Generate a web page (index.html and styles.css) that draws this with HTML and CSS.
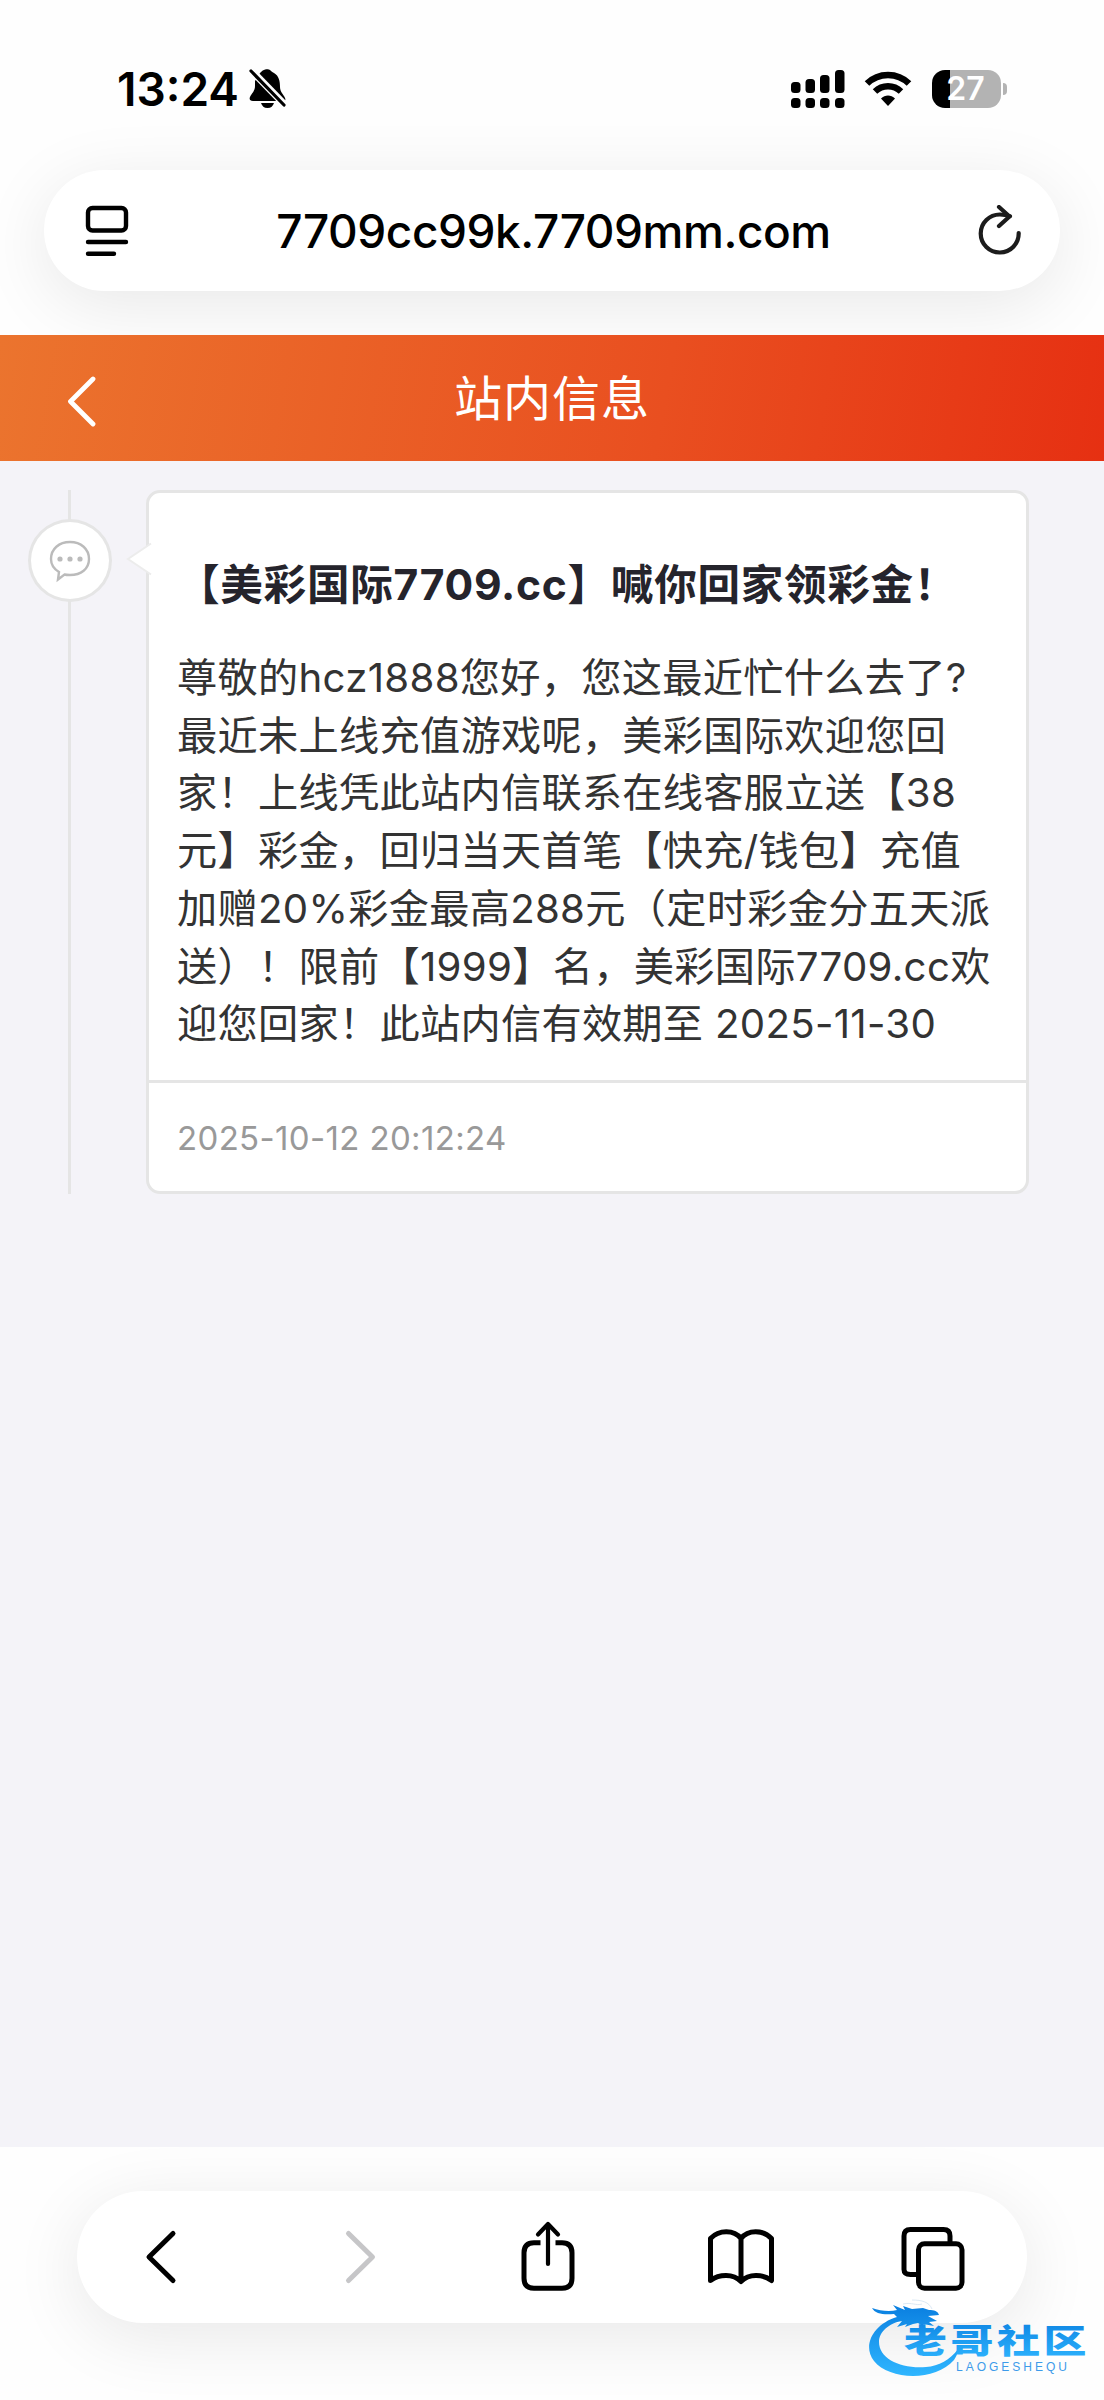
FILE: index.html
```html
<!DOCTYPE html>
<html lang="zh-CN">
<head>
  <meta charset="UTF-8">
  <meta name="viewport" content="width=device-width, initial-scale=1.0">
  <title>站内信息</title>
  <link rel="stylesheet" href="styles.css">
</head>
<body>
  <div class="top">
    <div class="status">
      <div class="status-left">
        <span class="time">13:24</span>
        <svg class="bell" width="38" height="42" viewBox="0 0 38 42">
          <path d="M11 5C13 3 14 2 15 2c1-1 5-1 6 0 1 1 2 2 4 3 5 3 6 8 6 14 0 5 4 8 5 11 1 2 0 3-2 3H4c-3 0-4-2-3-4 2-4 5-6 5-11V13z"/>
          <path d="M12 35h13c-1 3-3 5-6.500 5S13 38 12 35z"/>
          <path d="M1 1l36 37" stroke="#fdfdfd" stroke-width="7"/>
          <path d="M2 3l33 34" stroke="#000" stroke-width="3.200" stroke-linecap="round"/>
        </svg>
      </div>
      <div class="status-right">
        <svg width="54" height="40" viewBox="0 0 54 40">
          <rect x="0" y="13" width="9.500" height="11" rx="3.500"/>
          <rect x="14.500" y="10" width="9.500" height="14" rx="3.500"/>
          <rect x="29" y="6" width="9.500" height="18" rx="3.500"/>
          <rect x="44" y="1" width="9.500" height="23" rx="3.500"/>
          <rect x="0" y="29" width="9.500" height="10" rx="3.500"/>
          <rect x="14.500" y="29" width="9.500" height="10" rx="3.500"/>
          <rect x="29" y="29" width="9.500" height="10" rx="3.500"/>
          <rect x="44" y="29" width="9.500" height="10" rx="3.500"/>
        </svg>
        <svg class="wifi" width="48" height="40" viewBox="0 0 48 40">
          <path d="M3 14.500a30 30 0 0 1 42 0" fill="none" stroke="#000" stroke-width="6.500"/>
          <path d="M11 22.500a19 19 0 0 1 26 0" fill="none" stroke="#000" stroke-width="6.500"/>
          <path d="M24 37l-7-7.500c4-4 10-4 14 0z"/>
        </svg>
        <div class="battery"><span>27</span></div>
        <div class="battery-nub"></div>
      </div>
    </div>
    <div class="address">
      <svg width="44" height="52" viewBox="0 0 44 52" fill="none" stroke="#000" stroke-width="4.400" stroke-linecap="round">
        <rect x="3" y="3" width="38" height="22.500" rx="4.500"/>
        <path d="M3 37h38M3 48.700h26"/>
      </svg>
      <span class="url">7709cc99k.7709mm.com</span>
      <svg width="44" height="52" viewBox="0 0 44 52" fill="none" stroke="#1c1c1c" stroke-width="4.200" stroke-linecap="round" stroke-linejoin="round">
        <path d="M40.700 28A19 19 0 1 1 22 9.500c4 0 7 .7 10 1.700"/>
        <path d="M21 2l10.500 9.500L21 21"/>
      </svg>
    </div>
  </div>

  <header class="header">
    <svg width="30" height="52" viewBox="0 0 30 52" fill="none" stroke="#fff" stroke-width="4.800" stroke-linecap="round" stroke-linejoin="round">
      <path d="M27 4L4.500 26.500 27 49"/>
    </svg>
    <h1>站内信息</h1>
  </header>

  <main class="content">
    <div class="timeline">
      <div class="dot">
        <svg width="42" height="44" viewBox="0 0 42 44" fill="none" stroke="#bbb" stroke-width="2.400">
          <path d="M10 33C5 30 2 25.500 2 20 2 10 10 3 21 3s19 7 19 17-8 16-19 16c-2 0-4 0-5.500-.5L9 40.500z"/>
          <g fill="#bbb" stroke="none">
            <circle cx="11" cy="20" r="2.600"/>
            <circle cx="21" cy="20" r="2.600"/>
            <circle cx="31" cy="20" r="2.600"/>
          </g>
        </svg>
      </div>
    </div>
    <article class="card">
      <svg class="card-arrow" width="26" height="34" viewBox="0 0 26 34">
        <path d="M26 1L2 17l24 16z" fill="#fff"/>
        <path d="M25 1.500L2 17l23 15.500" fill="none" stroke="#ececec" stroke-width="2"/>
      </svg>
      <div class="card-body">
        <h2>【美彩国际7709.cc】喊你回家领彩金！</h2>
        <p>尊敬的hcz1888您好，您这最近忙什么去了?<br>
          最近未上线充值游戏呢，美彩国际欢迎您回<br>
          家！上线凭此站内信联系在线客服立送【38<br>
          元】彩金，回归当天首笔【快充/钱包】充值<br>
          加赠20%彩金最高288元（定时彩金分五天派<br>
          送）！限前【1999】名，美彩国际7709.cc欢<br>
          迎您回家！此站内信有效期至 2025-11-30</p>
      </div>
      <div class="card-footer">2025-10-12 20:12:24</div>
    </article>
  </main>

  <footer class="bottom">
    <nav class="toolbar">
      <svg width="68" height="72" viewBox="0 0 68 72">
        <path d="M45 12.500L21 36l24 23.500"/>
      </svg>
      <svg class="disabled" width="68" height="72" viewBox="0 0 68 72">
        <path d="M27.500 12.500l24 23.500-24 23.500"/>
      </svg>
      <svg width="68" height="72" viewBox="0 0 68 72">
        <path d="M26.500 21.700H20q-10 0-10 10v25.500q0 10 10 10h28q10 0 10-10V31.700q0-10-10-10h-6.500" stroke-linecap="butt"/>
        <path d="M34 43V3.500M24 13.500L34 3l10 10.500" stroke-width="4.200"/>
      </svg>
      <svg width="68" height="72" viewBox="0 0 68 72">
        <path d="M34 60V17.500C27 8.500 12 8.500 3.500 17.500v42c9-6.500 22.500-7 30.500 1 8-8 21.500-7.500 30.500-1v-42C56 8.500 41 8.500 34 17.500"/>
      </svg>
      <svg width="68" height="72" viewBox="0 0 68 72">
        <path d="M50 20.500V15q0-6.500-6.500-6.500h-33Q4 8.500 4 15v33.500Q4 53.500 10.500 53.500H16"/>
        <rect x="18.500" y="22.700" width="43.500" height="44.500" rx="6"/>
      </svg>
    </nav>
    <svg class="watermark" width="238" height="80" viewBox="0 0 238 80">
      <defs>
        <linearGradient id="blue" x1="0" y1="0" x2="0" y2="1">
          <stop offset="0" stop-color="#0a7fe0"/>
          <stop offset="1" stop-color="#2fb6ff"/>
        </linearGradient>
      </defs>
      <path fill="url(#blue)" d="M31 19C7 26-4 48 8 63c15 19 61 21 80-1 2-3 4-7 4-11-8 11-19 17-32 18C35 71 13 61 13 44 13 34 23 25 36 23l-5 6 10-3-2 3 8-3 5-1 8 5-3-4 11 2-5-4 8-1-9-5 11-1c-1-4-5-5-10-5l-6-2-11 1-9-3 2 4-12-5 4 5c-7 2-17 1-25-2 3 6 12 7 22 6z"/>
      <path d="M37 6c9-2 13 2 19 0M46 2c10 0 17 2 20 9" fill="none" stroke="#dbe9f5" stroke-width="1"/>
      <text class="wm-cn" transform="translate(38 55) scale(1.300 1)" fill="url(#blue)">老哥社区</text>
      <text class="wm-en" x="90" y="73" fill="#3d9bea">LAOGESHEQU</text>
    </svg>
  </footer>
</body>
</html>
```

FILE: styles.css
```css
* {
  box-sizing: border-box;
}
body {
  margin: 0;
  height: 2400px;
  display: flex;
  flex-direction: column;
  font-family: Inter, "Noto Sans CJK SC", sans-serif;
  background: #f4f3f8;
  color: #333;
  overflow: hidden;
}
svg {
  display: block;
  flex: none;
}
.top {
  height: 335px;
  background: #fefefe;
  overflow: hidden;
}
.status {
  height: 170px;
  padding: 8px 97px 0 117px;
  display: flex;
  align-items: center;
  justify-content: space-between;
}
.status-left, .status-right {
  display: flex;
  align-items: center;
}
.time {
  width: 132px;
  font-size: 46px;
  font-weight: 600;
  color: #000;
}
.wifi {
  margin: 0 20px 0 19px;
}
.battery {
  width: 69px;
  height: 38px;
  padding-right: 2px;
  border-radius: 13px;
  background: linear-gradient(to right, #000 18px, #b3b3b3 18px);
  color: #fff;
  font-size: 32px;
  font-weight: 600;
  line-height: 38px;
  text-align: center;
}
.battery-nub {
  width: 4px;
  height: 12px;
  margin-left: 2px;
  border-radius: 0 5px 5px 0;
  background: #b3b3b3;
}
.address {
  height: 121px;
  margin: 0 44px;
  padding: 0 38px 0 41px;
  display: flex;
  align-items: center;
  justify-content: space-between;
  border-radius: 61px;
  background: #fff;
  box-shadow: 0 14px 70px rgba(0, 0, 0, 0.09);
}
.url {
  padding-top: 1px;
  font-size: 46px;
  font-weight: 500;
  letter-spacing: -0.450px;
  color: #000;
  white-space: nowrap;
}
.header {
  height: 126px;
  padding: 0 66px;
  display: flex;
  align-items: center;
  background: linear-gradient(100deg, #eb742e, #e94f20 60%, #e63012);
}
.header svg {
  margin-top: 6px;
}
.header h1 {
  flex: 1;
  margin: -7px 30px 0 0;
  text-align: center;
  font-size: 48px;
  font-weight: 400;
  letter-spacing: 1px;
  color: #fff;
}
.content {
  flex: 1;
  padding: 29px 75px 0 28px;
  display: flex;
  align-items: flex-start;
}
.timeline {
  width: 84px;
  height: 704px;
  margin-right: 34px;
  padding-top: 29px;
  background: linear-gradient(#e5e5e5, #e5e5e5) 40px 0 / 3px 100% no-repeat;
}
.dot {
  width: 84px;
  height: 83px;
  display: flex;
  align-items: center;
  justify-content: center;
  border: 3px solid #e5e5e5;
  border-radius: 50%;
  background: #fff;
}
.card {
  position: relative;
  width: 883px;
  height: 704px;
  border: 3px solid #e5e5e5;
  border-radius: 14px;
  background: #fff;
  text-spacing-trim: space-all;
}
.card-arrow {
  position: absolute;
  left: -23px;
  top: 49px;
}
.card-body {
  height: 590px;
  padding: 62px 0 0 28px;
  border-bottom: 3px solid #e5e5e5;
  white-space: nowrap;
}
.card-body h2 {
  margin: 0;
  font-size: 42.600px;
  line-height: 60px;
  letter-spacing: 0.700px;
  color: #25242c;
}
.card-body p {
  margin: 34px 0 0;
  font-size: 40.200px;
  line-height: 57.700px;
  letter-spacing: 0.300px;
}
.card-footer {
  height: 108px;
  padding-left: 28px;
  line-height: 110px;
  font-size: 33px;
  letter-spacing: 0.350px;
  color: #999;
}
.bottom {
  position: relative;
  height: 253px;
  padding: 44px 77px 0;
  background: #fefefe;
  overflow: hidden;
}
.toolbar {
  height: 132px;
  padding: 0 59px 0 51px;
  display: flex;
  align-items: center;
  justify-content: space-between;
  border-radius: 66px;
  background: #fff;
  box-shadow: 0 14px 70px rgba(0, 0, 0, 0.09);
}
.toolbar svg {
  fill: none;
  stroke: #000;
  stroke-width: 5;
  stroke-linecap: round;
  stroke-linejoin: round;
}
.toolbar .disabled {
  stroke: #c6c6c8;
}
.watermark {
  position: absolute;
  left: 866px;
  top: 151px;
}
.wm-cn {
  font-family: "Noto Sans CJK SC", sans-serif;
  font-size: 33px;
  font-weight: 900;
  letter-spacing: 2.800px;
}
.wm-en {
  font-family: "Liberation Sans", sans-serif;
  font-size: 12px;
  letter-spacing: 3px;
}
```
